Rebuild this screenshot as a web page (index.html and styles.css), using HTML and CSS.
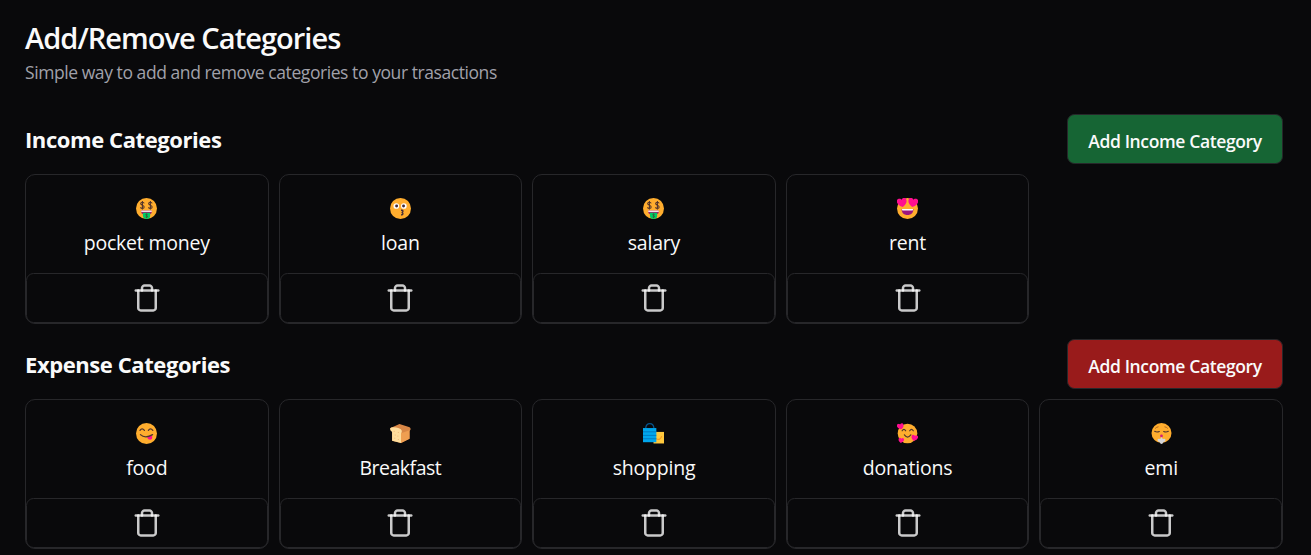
FILE: index.html
```html
<!DOCTYPE html>
<html lang="en">
<head>
<meta charset="utf-8">
<title>Add/Remove Categories</title>
<link rel="stylesheet" href="styles.css">
</head>
<body>
<svg class="sprite" aria-hidden="true">
  <symbol id="trash" viewBox="0 0 24 24">
    <g fill="none" stroke="#fafafa" stroke-opacity=".8" stroke-width="2" stroke-linecap="round" stroke-linejoin="round">
      <path d="M3 6h18"/><path d="M19 6v14c0 1-1 2-2 2H7c-1 0-2-1-2-2V6"/><path d="M8 6V4c0-1 1-2 2-2h4c1 0 2 1 2 2v2"/>
    </g>
  </symbol>
  <symbol id="dollar" viewBox="0 0 4 7">
    <path d="M3.4 1.9C3.2 1.2 2.7 1 2 1 1.2 1 .6 1.4.6 2.1.6 3.7 3.4 3 3.4 4.8 3.4 5.6 2.8 6 2 6 1.2 6 .7 5.7.5 5M2 .1v6.8" fill="none" stroke="#53352d" stroke-width=".85"/>
  </symbol>
  <symbol id="money" viewBox="0 0 20 20">
    <circle cx="10" cy="10" r="10" fill="#ffad2e"/>
    <use href="#dollar" x="3.6" y="2.8" width="5" height="8.4"/>
    <use href="#dollar" x="11.200" y="2.8" width="5" height="8.4"/>
    <path d="M5 12h10v1q0 2.500-3 2.500H8q-3 0-3-2.500z" fill="#a51d70"/>
    <path d="M5 12h10v1.2H5z" fill="#fff"/>
    <path d="M6.6 14h6.9v3q0 3-3.4 3t-3.500-3z" fill="#00cc65"/>
    <use href="#dollar" x="8.8" y="14.5" width="2.6" height="4.6"/>
  </symbol>
  <symbol id="kiss" viewBox="0 0 20 20">
    <circle cx="10" cy="10" r="10" fill="#ffad2e"/>
    <circle cx="6" cy="7.6" r="2.7" fill="#fff"/><circle cx="13.2" cy="7.6" r="2.7" fill="#fff"/>
    <circle cx="6.3" cy="7.7" r="1.4" fill="#402a38"/><circle cx="12.9" cy="7.7" r="1.4" fill="#402a38"/>
    <path d="M10.500 11.700q2-.3 1.800 1-.1 1-1.300 1.100 1.400.1 1.300 1.300-.2 1.100-1.800.9" fill="none" stroke="#402a38" stroke-width="1.300"/>
  </symbol>
  <symbol id="heart" viewBox="0 0 10 9">
    <path d="M5 9C2 7.3 0 5.3 0 2.8 0 0 3.6-1 5 1.6 6.4-1 10 0 10 2.8 10 5.3 8 7.3 5 9z" fill="#ff0f90"/>
  </symbol>
  <symbol id="hearts" viewBox="0 0 20 20">
    <circle cx="10" cy="10" r="10" fill="#ffad2e"/>
    <use href="#heart" x="0" y="0" width="9.5" height="8.6" transform="rotate(-10 5 4)"/>
    <use href="#heart" x="10.5" y="0" width="9.5" height="8.6" transform="rotate(10 15 4)"/>
    <path d="M4.4 10.5h11.2c0 3.8-2.2 5.7-5.6 5.7s-5.6-1.9-5.6-5.7z" fill="#9c157e"/>
    <path d="M4.6 10.5h10.8l-.5 1.3H5.1z" fill="#fff"/>
  </symbol>
  <symbol id="yum" viewBox="0 0 20 20">
    <circle cx="10" cy="10" r="10" fill="#ffad2e"/>
    <path d="M10.5 13.7l4.7-1.9.3 1.8q.2 2.3-1.9 2.3-2 0-3.1-2.2z" fill="#ff0f90"/>
    <path d="M3.8 7.1q2-3 4.2 0M11.8 7.1q2-3 4.2 0M4.2 11.1q4.5 4.2 11.6 0" fill="none" stroke="#53352d" stroke-width="1.2" stroke-linecap="round"/>
  </symbol>
  <symbol id="bread" viewBox="0 0 20 20">
    <path d="M0 5l9-4 7.500 2.300q3.500.6 3.100 3l-1 1.600V15l-8.100 4L2 17V8z" fill="#d98746"/>
    <path d="M10.5 9.800l8.100-3V15l-8.100 4z" fill="#ef9e51"/>
    <path d="M0 5.4q1-2.1 6-1 6 1.2 5.2 4.1l-.7 1.4V19L2 17V8.5Q0 7.2 0 5.4z" fill="#ffdd9c"/>
    <path d="M3.5 8h1m3 1h1m-4 2.5h1m1.5 1h1m-4 2h1m2.5 1.2h1" stroke="#efb878" stroke-width=".9"/>
  </symbol>
  <symbol id="bags" viewBox="0 0 20 20">
    <path d="M10 8.500h10v11H10z" fill="#ffc83d"/>
    <path d="M12.500 15q4 2 5.300-2.500" fill="none" stroke="#f59b22" stroke-width="1.1"/>
    <path d="M2.600 4.800Q3 .6 6.500.6t3.900 4.200" fill="none" stroke="#07558d" stroke-width="1.2"/>
    <path d="M0 4.8h12.700v13.500H0z" fill="#00a6ed"/>
    <path d="M0 8.400h12.700M0 11.800h12.700M0 15h12.700" stroke="#0074ba" stroke-width=".8"/>
  </symbol>
  <symbol id="adore" viewBox="0 0 21 20">
    <circle cx="10.5" cy="10" r="9.8" fill="#ffad2e"/>
    <path d="M5.1 7.300q1.800-3 3.600 0M12.7 7.300q1.800-3 3.600 0M7.400 11.300q3.200 4.500 6.400 0" fill="none" stroke="#53352d" stroke-width="1.15" stroke-linecap="round"/>
    <use href="#heart" x="0" y="0" width="7" height="6.2" transform="rotate(-12 3 3)"/>
    <use href="#heart" x="1.2" y="14.2" width="5.800" height="5.300" transform="rotate(8 4 17)"/>
    <use href="#heart" x="14.2" y="11.300" width="6.800" height="6.100" transform="rotate(12 17 14)"/>
  </symbol>
  <symbol id="exhale" viewBox="0 0 20 21">
    <circle cx="10" cy="10" r="10" fill="#ffad2e"/>
    <path d="M3.200 8.300q2 1.300 4.600.2M12.200 8.500q2.600 1.100 4.600-.2" fill="none" stroke="#53352d" stroke-width="1.200" stroke-linecap="round"/>
    <path d="M4 5.200q1-1.200 2.600-1.400M13.400 3.800Q15 4 16 5.200" fill="none" stroke="#a9611f" stroke-width=".9" stroke-linecap="round"/>
    <circle cx="10" cy="13" r="1.400" fill="#d51f78"/>
    <path d="M10 14l1.300 2q2.800-.7 2.700 1.200 0 1.500-2 1.800-.7 2-2 2t-1.900-2Q6 19 6 17.200q0-1.900 2.700-1.200z" fill="#d5d5d8"/>
  </symbol>
</svg>

<main class="page">
  <header class="intro">
    <h1 class="title">Add/Remove Categories</h1>
    <p class="subtitle">Simple way to add and remove categories to your trasactions</p>
  </header>

  <section class="group">
    <div class="group-head">
      <h2 class="group-title">Income Categories</h2>
      <button class="add add-income">Add Income Category</button>
    </div>
    <div class="cards">
      <article class="card"><div class="body"><svg class="emoji"><use href="#money"/></svg><span class="name">pocket money</span></div><button class="remove" aria-label="Remove"><svg class="trash"><use href="#trash"/></svg></button></article>
      <article class="card"><div class="body"><svg class="emoji"><use href="#kiss"/></svg><span class="name">loan</span></div><button class="remove" aria-label="Remove"><svg class="trash"><use href="#trash"/></svg></button></article>
      <article class="card"><div class="body"><svg class="emoji"><use href="#money"/></svg><span class="name">salary</span></div><button class="remove" aria-label="Remove"><svg class="trash"><use href="#trash"/></svg></button></article>
      <article class="card"><div class="body"><svg class="emoji"><use href="#hearts"/></svg><span class="name">rent</span></div><button class="remove" aria-label="Remove"><svg class="trash"><use href="#trash"/></svg></button></article>
    </div>
  </section>

  <section class="group">
    <div class="group-head">
      <h2 class="group-title">Expense Categories</h2>
      <button class="add add-expense">Add Income Category</button>
    </div>
    <div class="cards">
      <article class="card"><div class="body"><svg class="emoji"><use href="#yum"/></svg><span class="name">food</span></div><button class="remove" aria-label="Remove"><svg class="trash"><use href="#trash"/></svg></button></article>
      <article class="card"><div class="body"><svg class="emoji"><use href="#bread"/></svg><span class="name name-tight">Breakfast</span></div><button class="remove" aria-label="Remove"><svg class="trash"><use href="#trash"/></svg></button></article>
      <article class="card"><div class="body"><svg class="emoji"><use href="#bags"/></svg><span class="name">shopping</span></div><button class="remove" aria-label="Remove"><svg class="trash"><use href="#trash"/></svg></button></article>
      <article class="card"><div class="body"><svg class="emoji"><use href="#adore"/></svg><span class="name">donations</span></div><button class="remove" aria-label="Remove"><svg class="trash"><use href="#trash"/></svg></button></article>
      <article class="card"><div class="body"><svg class="emoji"><use href="#exhale"/></svg><span class="name">emi</span></div><button class="remove" aria-label="Remove"><svg class="trash"><use href="#trash"/></svg></button></article>
    </div>
  </section>
</main>
</body>
</html>
```
FILE: styles.css
```css
* { box-sizing: border-box; margin: 0; padding: 0; }
body {
  background: #09090b;
  color: #fafafa;
  font-family: "Segoe UI", "Open Sans", "Noto Sans", sans-serif;
  overflow: hidden;
}
.sprite { display: none; }
.page { padding: 19px 28px 0 25px; }
.intro { height: 95px; }
.title { font-size: 29px; font-weight: 600; line-height: 38px; letter-spacing: -.96px; white-space: nowrap; }
.subtitle { color: #a1a1aa; font-size: 17.5px; line-height: 30px; letter-spacing: -.43px; white-space: nowrap; }
.group { margin-bottom: 15px; }
.group-head { display: flex; align-items: center; justify-content: space-between; height: 50px; margin-bottom: 10px; }
.group-title { font-size: 22px; font-weight: 700; line-height: 30px; letter-spacing: -.42px; }
.add {
  width: 216px;
  height: 50px;
  padding-top: 3px;
  border: 1px solid #27272a;
  border-radius: 7.5px;
  color: #fafafa;
  font: 600 17.5px/24px "Segoe UI", "Open Sans", "Noto Sans", sans-serif;
  letter-spacing: -.37px;
  white-space: nowrap;
}
.add-income { background: #166534; }
.add-expense { background: #991b1b; }
.cards { display: grid; grid-template-columns: repeat(5, 1fr); gap: 10px; }
.card { height: 150px; border: 1px solid #27272a; border-radius: 10px; }
.body { display: flex; flex-direction: column; align-items: center; height: 98px; padding-top: 23px; }
.emoji { width: 21px; height: 21px; margin-bottom: 9px; }
.name { font-size: 19.5px; line-height: 30px; letter-spacing: -.2px; white-space: nowrap; }
.name-tight { letter-spacing: -.5px; }
.remove {
  display: flex;
  align-items: center;
  justify-content: center;
  width: 100%;
  height: 50px;
  border: 1px solid #27272a;
  border-radius: 7.5px;
  background: transparent;
}
.trash { width: 30px; height: 30px; }
```
